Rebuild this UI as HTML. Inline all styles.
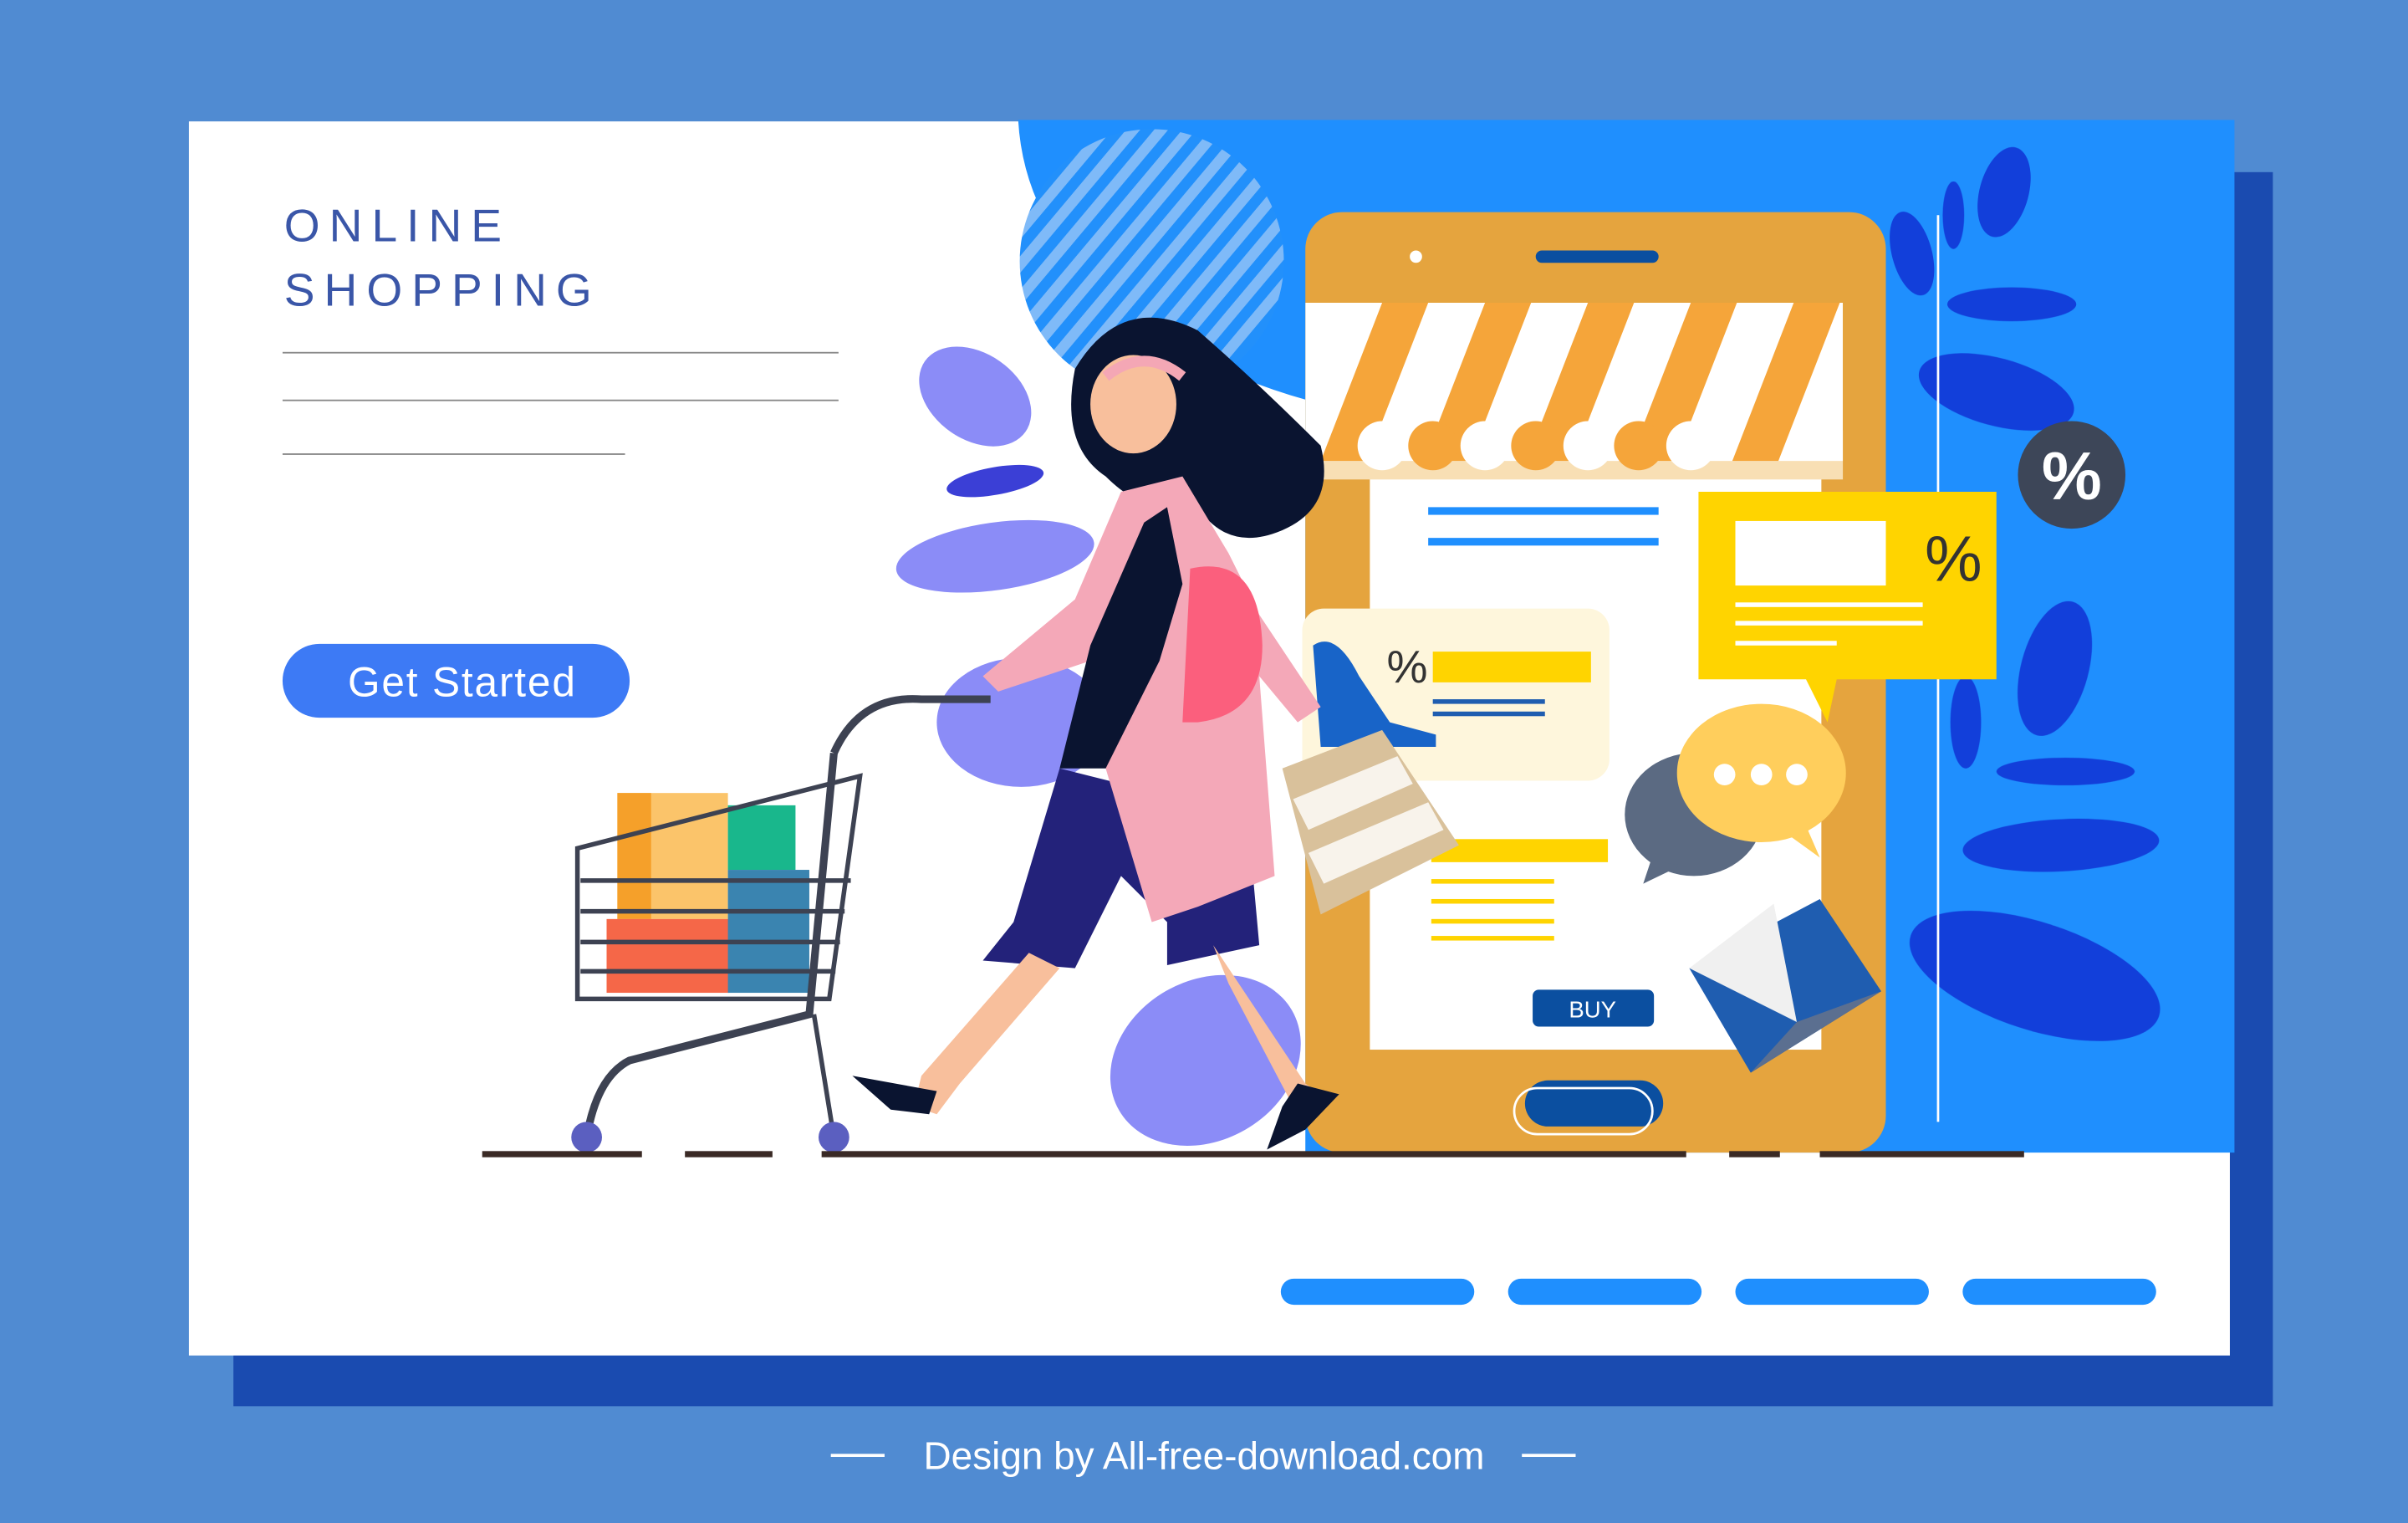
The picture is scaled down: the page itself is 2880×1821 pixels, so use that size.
<!DOCTYPE html>
<html><head><meta charset="utf-8"><style>html,body{margin:0;padding:0;width:2880px;height:1821px;overflow:hidden;background:#508bd2}svg{display:block}</style></head>
<body>
<svg width="2880" height="1821" viewBox="0 0 1568 991" preserveAspectRatio="none" xmlns="http://www.w3.org/2000/svg" font-family="Liberation Sans, sans-serif">
<defs>
<pattern id="st" width="14" height="14" patternUnits="userSpaceOnUse" patternTransform="rotate(40)"><rect width="14" height="14" fill="#2290fb"/><rect width="7" height="14" fill="#7fbaf8"/></pattern>
<clipPath id="aw"><rect x="850" y="197" width="350" height="103"/></clipPath>
</defs>
<rect width="1568" height="991" fill="#508bd2"/>
<rect x="152" y="112" width="1328" height="803" fill="#1a4bb0"/>
<rect x="123" y="79" width="1329" height="803" fill="#fff"/>
<path d="M663 78 H1455 V750 H850 V260 Q760 235 700 170 Q666 130 663 78Z" fill="#1f8ffe"/>
<circle cx="750" cy="170" r="86" fill="url(#st)"/>
<!-- text -->
<text x="185" y="157" font-size="30" fill="#3a56a8" letter-spacing="6">ONLINE</text>
<text x="185" y="199" font-size="30" fill="#3a56a8" letter-spacing="6">SHOPPING</text>
<rect x="184" y="229" width="362" height="1" fill="#888"/>
<rect x="184" y="260" width="362" height="1" fill="#888"/>
<rect x="184" y="295" width="223" height="1" fill="#888"/>
<rect x="184" y="419" width="226" height="48" rx="24" fill="#3d7af5"/>
<text x="301" y="453" font-size="27" fill="#fff" text-anchor="middle" letter-spacing="1">Get Started</text>
<!-- leaves right -->
<g fill="#1136d6" opacity=".9">
<ellipse cx="1310" cy="198" rx="42" ry="11"/>
<ellipse cx="1300" cy="255" rx="52" ry="22" transform="rotate(15 1300 255)"/>
<ellipse cx="1342" cy="550" rx="64" ry="17" transform="rotate(-3 1342 550)"/>
<ellipse cx="1325" cy="635" rx="85" ry="35" transform="rotate(18 1325 635)"/>
<ellipse cx="1338" cy="435" rx="22" ry="45" transform="rotate(15 1338 435)"/>
<ellipse cx="1305" cy="125" rx="16" ry="30" transform="rotate(15 1305 125)"/>
<ellipse cx="1245" cy="165" rx="13" ry="28" transform="rotate(-15 1245 165)"/>
<ellipse cx="1345" cy="502" rx="45" ry="9"/>
<ellipse cx="1272" cy="140" rx="7" ry="22"/>
<ellipse cx="1280" cy="470" rx="10" ry="30"/>
</g>
<line x1="1262" y1="140" x2="1262" y2="730" stroke="#fff" stroke-width="1.5"/>
<circle cx="1349" cy="309" r="35" fill="#3d4658"/>
<text x="1349" y="325" font-size="44" font-weight="bold" fill="#fff" text-anchor="middle">%</text>
<!-- leaves left (purple) -->
<g fill="#8b8cf7">
<ellipse cx="635" cy="258" rx="40" ry="28" transform="rotate(35 635 258)"/>
<ellipse cx="648" cy="362" rx="65" ry="22" transform="rotate(-8 648 362)"/>
<ellipse cx="665" cy="470" rx="55" ry="42"/>
<ellipse cx="785" cy="690" rx="65" ry="52" transform="rotate(-30 785 690)"/>
</g>
<ellipse cx="648" cy="313" rx="32" ry="9" fill="#3b3fd6" transform="rotate(-10 648 313)"/>
<!-- phone -->
<rect x="850" y="138" width="378" height="612" rx="24" fill="#e5a43e"/>
<rect x="892" y="200" width="294" height="483" fill="#fff"/>
<rect x="1000" y="163" width="80" height="8" rx="4" fill="#0b4fa0"/>
<circle cx="922" cy="167" r="4" fill="#fff"/>
<rect x="993" y="703" width="90" height="30" rx="15" fill="#0b4fa0"/>
<rect x="986" y="708" width="90" height="30" rx="15" fill="none" stroke="#fff" stroke-width="1.5"/>
<rect x="850" y="280" width="350" height="32" fill="#f8dfb4"/>
<g clip-path="url(#aw)">
<rect x="850" y="197" width="350" height="103" fill="#fff"/>
<g fill="#f5a53a"><path d="M860 300 L900 197 H930 L890 300Z"/><path d="M927 300 L967 197 H997 L957 300Z"/><path d="M994 300 L1034 197 H1064 L1024 300Z"/><path d="M1061 300 L1101 197 H1131 L1091 300Z"/><path d="M1128 300 L1168 197 H1198 L1158 300Z"/></g>
</g>
<g fill="#fff"><circle cx="900" cy="290" r="16"/><circle cx="967" cy="290" r="16"/><circle cx="1034" cy="290" r="16"/><circle cx="1101" cy="290" r="16"/></g>
<g fill="#f5a53a"><circle cx="933" cy="290" r="16"/><circle cx="1000" cy="290" r="16"/><circle cx="1067" cy="290" r="16"/></g>
<rect x="930" y="330" width="150" height="5" fill="#1f8ffe"/>
<rect x="930" y="350" width="150" height="5" fill="#1f8ffe"/>
<rect x="848" y="396" width="200" height="112" rx="14" fill="#fef6dc"/>
<text x="903" y="444" font-size="30" fill="#333">%</text>
<rect x="933" y="424" width="103" height="20" fill="#ffd400"/>
<rect x="933" y="455" width="73" height="3" fill="#1f5db0"/>
<rect x="933" y="463" width="73" height="3" fill="#1f5db0"/>
<path d="M855 420 Q870 410 885 440 L905 470 L935 478 V486 H860Z" fill="#1864c8"/>
<rect x="932" y="546" width="115" height="15" fill="#ffd400"/>
<g fill="#ffd400"><rect x="932" y="572" width="80" height="3"/><rect x="932" y="585" width="80" height="3"/><rect x="932" y="598" width="80" height="3"/><rect x="932" y="609" width="80" height="3"/></g>
<rect x="998" y="644" width="79" height="24" rx="4" fill="#0b4fa0"/>
<text x="1037" y="662" font-size="15" fill="#fff" text-anchor="middle">BUY</text>
<path d="M1106 320 H1300 V442 H1196 L1190 470 L1176 442 H1106Z" fill="#ffd400"/>
<rect x="1130" y="339" width="98" height="42" fill="#fff"/>
<text x="1272" y="378" font-size="42" fill="#333" text-anchor="middle">%</text>
<rect x="1130" y="392" width="122" height="3" fill="#fff"/><rect x="1130" y="404" width="122" height="3" fill="#fff"/><rect x="1130" y="417" width="66" height="3" fill="#fff"/>
<ellipse cx="1103" cy="530" rx="45" ry="40" fill="#5b6a82"/>
<path d="M1075 560 L1070 575 L1095 563Z" fill="#5b6a82"/>
<ellipse cx="1147" cy="503" rx="55" ry="45" fill="#ffce5c"/>
<path d="M1160 540 L1185 558 L1175 535Z" fill="#ffce5c"/>
<g fill="#fff"><circle cx="1123" cy="504" r="7"/><circle cx="1147" cy="504" r="7"/><circle cx="1170" cy="504" r="7"/></g>
<path d="M1100 630 L1185 585 L1225 645 L1140 698Z" fill="#1f5db0"/>
<path d="M1100 630 L1155 588 L1170 665Z" fill="#f0f0f0"/>
<path d="M1140 698 L1225 645 L1170 665Z" fill="#5b6f90"/>
<!-- cart -->
<rect x="402" y="516" width="72" height="82" fill="#fbc46a"/><rect x="402" y="516" width="22" height="82" fill="#f5a02a"/>
<rect x="474" y="524" width="44" height="42" fill="#19b78c"/>
<rect x="395" y="598" width="80" height="48" fill="#f56748"/>
<rect x="474" y="566" width="53" height="80" fill="#3a84b0"/>
<g stroke="#3d4252" stroke-width="3" fill="none">
<path d="M376 552 L560 505 L540 650 H376Z"/>
<line x1="378" y1="573" x2="554" y2="573"/><line x1="378" y1="593" x2="550" y2="593"/><line x1="378" y1="613" x2="547" y2="613"/><line x1="378" y1="632" x2="544" y2="632"/>
<path d="M530 660 L543 740"/><path d="M543 490 Q560 452 600 455 H645" stroke-width="5"/>
<path d="M543 490 L527 660 L410 690 Q390 700 383 735" stroke-width="5"/>
</g>
<circle cx="382" cy="740" r="10" fill="#5b5fc0"/><circle cx="543" cy="740" r="10" fill="#5b5fc0"/>
<!-- woman -->
<path d="M700 240 Q730 190 780 215 Q820 250 860 290 Q870 330 835 345 Q800 360 780 330 L760 330 Q740 330 720 310 Q690 290 700 240Z" fill="#0a1430"/>
<ellipse cx="738" cy="263" rx="28" ry="32" fill="#f8bf9c"/>
<path d="M720 245 Q745 225 770 245" stroke="#f4a7b5" stroke-width="7" fill="none"/>
<path d="M690 500 L660 600 L640 625 L700 630 L730 570 L760 600 L760 628 L820 615 L815 560 L770 520Z" fill="#23227a"/>
<path d="M730 320 L770 310 L800 360 L820 400 L860 460 L845 470 L820 440 L830 570 L780 590 L750 600 L720 500 L710 430 L650 450 L640 440 L700 390Z" fill="#f4a8b8"/>
<path d="M745 340 L760 330 L770 380 L755 430 L720 500 L690 500 L710 420Z" fill="#0a1430"/>
<path d="M775 370 Q820 360 822 420 Q822 465 780 470 L770 470Z" fill="#fb5f7d"/>
<path d="M670 620 L600 700 L595 720 L610 725 L625 705 L690 630Z" fill="#f8bf9c"/>
<path d="M790 615 L850 705 L860 712 L840 716 L800 640Z" fill="#f8bf9c"/>
<path d="M555 700 L610 710 L605 725 L580 722Z" fill="#0a1430"/>
<path d="M845 705 L872 712 L850 735 L825 748 L835 720Z" fill="#0a1430"/>
<path d="M835 500 L900 475 L950 550 L860 595Z" fill="#d9c19b"/>
<path d="M842 520 L910 492 L920 510 L852 540Z M852 555 L930 522 L940 540 L862 575Z" fill="#fff" opacity=".8"/>
<!-- ground -->
<g fill="#3a2a25"><rect x="314" y="749" width="104" height="4"/><rect x="446" y="749" width="57" height="4"/><rect x="535" y="749" width="563" height="4"/><rect x="1126" y="749" width="33" height="4"/><rect x="1185" y="749" width="133" height="4"/></g>
<!-- bottom bars -->
<g fill="#1f8ffe"><rect x="834" y="832" width="126" height="17" rx="8.5"/><rect x="982" y="832" width="126" height="17" rx="8.5"/><rect x="1130" y="832" width="126" height="17" rx="8.5"/><rect x="1278" y="832" width="126" height="17" rx="8.5"/></g>
<rect x="541" y="946" width="35" height="2" fill="#fff"/><rect x="991" y="946" width="35" height="2" fill="#fff"/>
<text x="784" y="956" font-size="25" fill="#fff" text-anchor="middle">Design by All-free-download.com</text>
</svg>
</body></html>
